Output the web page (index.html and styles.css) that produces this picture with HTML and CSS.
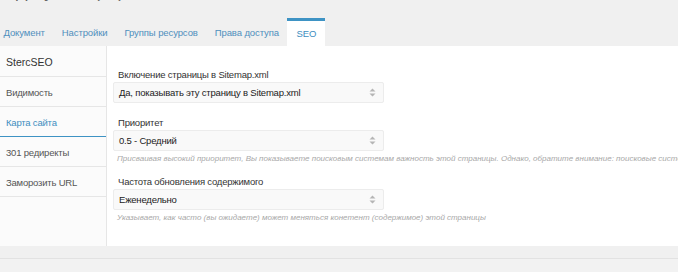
FILE: index.html
```html
<!DOCTYPE html>
<html lang="ru">
<head>
    <meta charset="UTF-8">
    <title>SEO</title>
    <link rel="stylesheet" href="styles.css">
</head>
<body>
  <div class="page-title"><span>Документ (12)</span></div>

  <div class="tabs">
    <a class="tab" href="#">Документ</a>
    <a class="tab" href="#">Настройки</a>
    <a class="tab" href="#">Группы ресурсов</a>
    <a class="tab" href="#">Права доступа</a>
    <a class="tab active" href="#">SEO</a>
  </div>

  <div class="panel">
    <div class="sidebar">
      <div class="side-head">SterсSEO</div>
      <a class="side-item" href="#">Видимость</a>
      <a class="side-item active" href="#">Карта сайта</a>
      <a class="side-item" href="#">301 редиректы</a>
      <a class="side-item" href="#">Заморозить URL</a>
    </div>

    <div class="content">
      <div class="field">
        <div class="label">Включение страницы в Sitemap.xml</div>
        <div class="select">
          <span>Да, показывать эту страницу в Sitemap.xml</span>
          <svg class="arrows" width="7" height="9" viewBox="0 0 7 9"><path d="M3.5 0.5L6.5 3.5H0.5Z M3.5 8.5L6.5 5.5H0.5Z" fill="#b5b5b5"/></svg>
        </div>
      </div>

      <div class="field">
        <div class="label">Приоритет</div>
        <div class="select">
          <span>0.5 - Средний</span>
          <svg class="arrows" width="7" height="9" viewBox="0 0 7 9"><path d="M3.5 0.5L6.5 3.5H0.5Z M3.5 8.5L6.5 5.5H0.5Z" fill="#b5b5b5"/></svg>
        </div>
        <div class="help">Присваивая высокий приоритет, Вы показываете поисковым системам важность этой страницы. Однако, обратите внимание: поисковые системы не обязательно будут учитывать эти данные.</div>
      </div>

      <div class="field">
        <div class="label">Частота обновления содержимого</div>
        <div class="select">
          <span>Еженедельно</span>
          <svg class="arrows" width="7" height="9" viewBox="0 0 7 9"><path d="M3.5 0.5L6.5 3.5H0.5Z M3.5 8.5L6.5 5.5H0.5Z" fill="#b5b5b5"/></svg>
        </div>
        <div class="help">Указывает, как часто (вы ожидаете) может меняться конетент (содержимое) этой страницы</div>
      </div>
    </div>
  </div>

  <div class="next-panel">Содержимое</div>
</body>
</html>
```

FILE: styles.css
```css
body {
    margin: 0;
    background-color: #f0f0f0;
    font-family: "Liberation Sans", Arial, sans-serif;
    font-size: 9.5px;
    letter-spacing: -0.2px;
    color: #333;
    overflow: hidden;
}

.page-title {
    height: 18px;
    overflow: hidden;
}
.page-title span {
    display: block;
    margin-top: -16px;
    padding-left: 16px;
    font-size: 17px;
    line-height: 18px;
    color: #666;
}

.tabs {
    display: flex;
    height: 28px;
    margin-left: -5px;
    letter-spacing: -0.1px;
}
.tab {
    padding: 0 8.5px;
    line-height: 29px;
    color: #4f8fbd;
    text-decoration: none;
}
.tab.active {
    padding: 0 9px;
    background-color: #fff;
    border-top: 3px solid #3e93c4;
    line-height: 26px;
    color: #3e8ec0;
}

.panel {
    display: flex;
    height: 200px;
    background-color: #fff;
}

.sidebar {
    width: 106px;
    flex-shrink: 0;
    background-color: #fbfbfb;
    border-right: 1px solid #e6e6e6;
}
.side-head {
    height: 30px;
    line-height: 32px;
    padding-left: 6px;
    font-size: 10.5px;
    letter-spacing: 0;
    color: #333;
    border-bottom: 1px solid #e6e6e6;
}
.side-item {
    display: block;
    height: 29px;
    line-height: 31px;
    padding-left: 6px;
    color: #555;
    text-decoration: none;
    border-bottom: 1px solid #e6e6e6;
}
.side-item.active {
    color: #3e8ec0;
    border-bottom: 1px solid #3e93c4;
}

.content {
    flex: 1;
    min-width: 0;
    padding: 21px 0 0 6px;
}

.field {
    margin-bottom: 12px;
}
.label {
    line-height: 15px;
    padding-left: 5px;
    color: #333;
}
.select {
    display: flex;
    align-items: center;
    justify-content: space-between;
    box-sizing: border-box;
    width: 271px;
    height: 21px;
    padding: 0 7px 0 5px;
    background-color: #f9f9f9;
    border: 1px solid #ececec;
    border-radius: 2px;
    color: #222;
}
.help {
    padding: 2px 0 0 4px;
    margin-bottom: -3px;
    line-height: 12px;
    font-size: 8px;
    letter-spacing: 0;
    font-style: italic;
    color: #a8a8a8;
    white-space: nowrap;
}

.next-panel {
    margin-top: 12px;
    padding: 11px 6px 0;
    border-top: 1px solid #e2e2e2;
    background-color: #f2f2f2;
    height: 40px;
    font-size: 11px;
    color: #444;
}
```
